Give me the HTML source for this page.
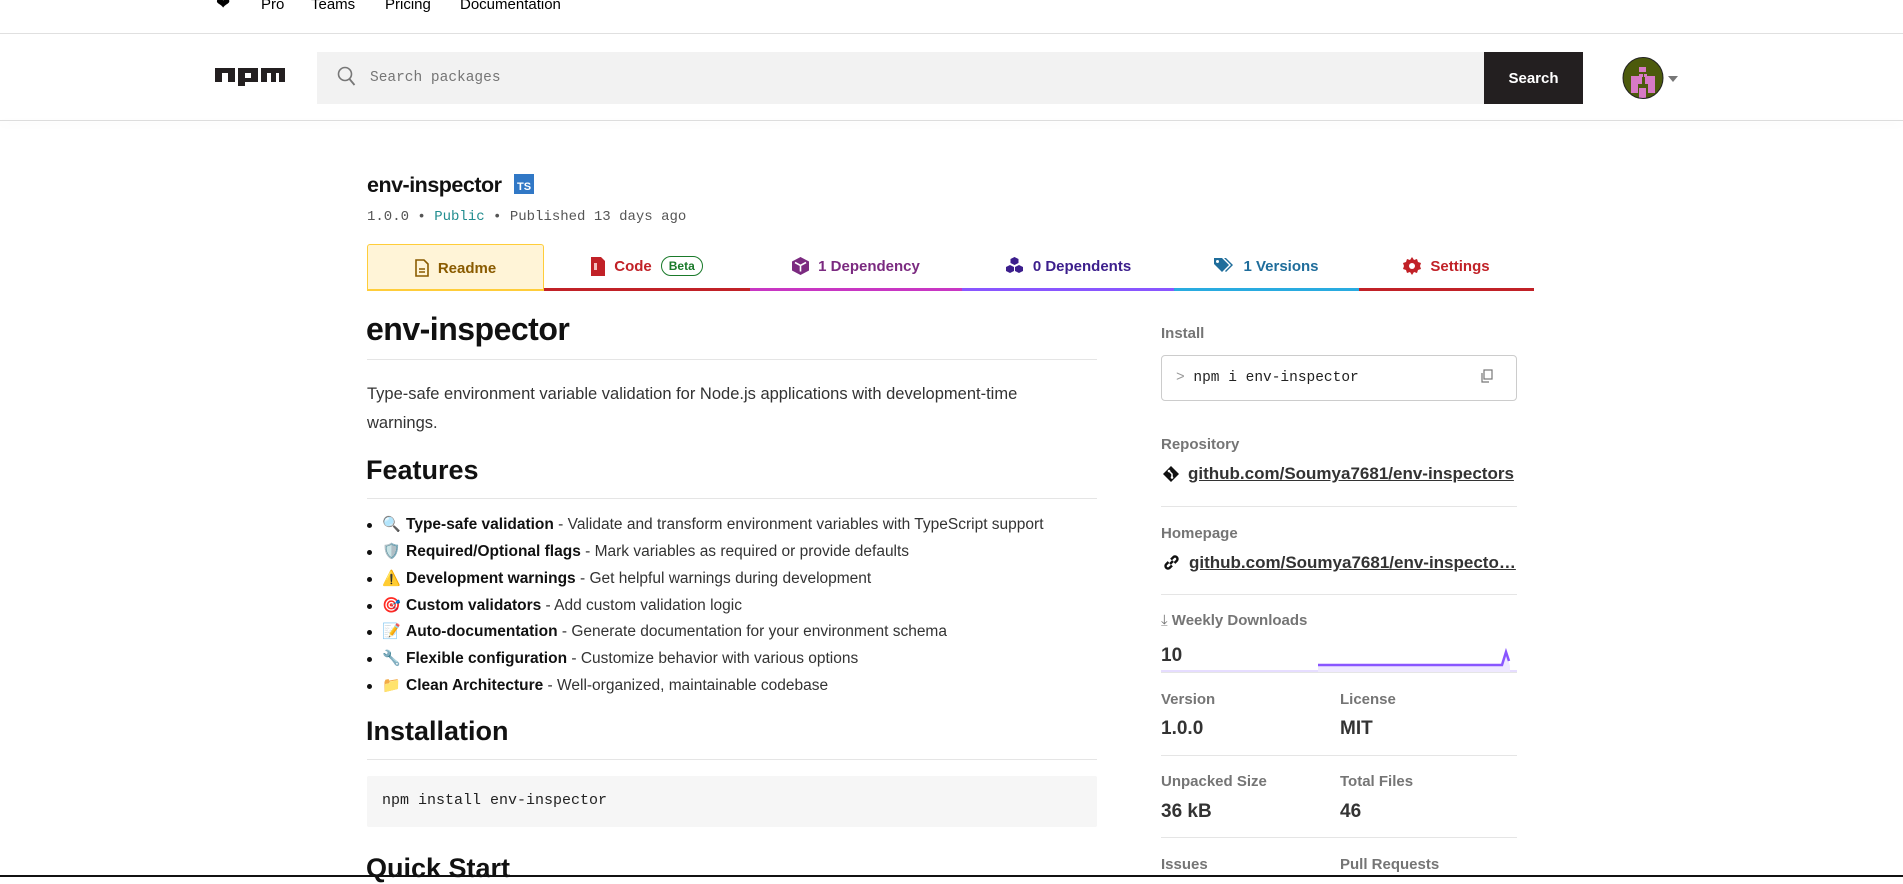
<!DOCTYPE html>
<html><head><meta charset="utf-8">
<style>
*{box-sizing:border-box;margin:0;padding:0}
body{width:1903px;height:877px;overflow:hidden;background:#fff;font-family:"Liberation Sans",sans-serif;color:#333;position:relative}
.a{position:absolute;white-space:nowrap}
.mono{font-family:"Liberation Mono",monospace}
.topnav{font-size:15px;color:#000;top:-4px}
.hr{position:absolute;height:1px;background:#e5e5e5}
.lab{font-size:15px;font-weight:bold;color:#757575}
.val{font-size:19px;font-weight:bold;color:#333}
.tab{position:absolute;top:244px;height:47px;font-size:15px;display:flex;align-items:center;justify-content:center;gap:9px}
.li{position:absolute;left:367px;font-size:15.5px;color:#333;white-space:nowrap}
.li b{color:#111}
.li:before{content:"";position:absolute;left:0;top:7px;width:5px;height:5px;border-radius:50%;background:#111}
.li span.e{position:absolute;left:15px;top:-1px;font-size:15px}
.li .t{position:absolute;left:39px;top:0}
</style></head><body>

<div class="a topnav" style="left:216px;font-size:17px;top:-6px">&#10084;</div>
<div class="a topnav" style="left:261px">Pro</div>
<div class="a topnav" style="left:311px">Teams</div>
<div class="a topnav" style="left:385px">Pricing</div>
<div class="a topnav" style="left:460px">Documentation</div>
<div class="hr" style="left:0;top:33px;width:1903px;background:#e0e0e0"></div>

<svg class="a" style="left:215px;top:68px" width="70" height="20" viewBox="0 0 70 20">
<path fill="#231f20" fill-rule="evenodd" d="M0 0h20v14h-7V5h-6v9H0z M23 0h20v14h-13v4h-7z M30 5v5h6V5z M46 0h24v14h-6V5h-3v9h-5V5h-4v9h-6z"/>
</svg>
<div class="a" style="left:317px;top:52px;width:1167px;height:52px;background:#f2f2f2"></div>
<svg class="a" style="left:337px;top:66px" width="20" height="22" viewBox="0 0 20 22"><circle cx="8" cy="8" r="6.5" fill="none" stroke="#777" stroke-width="1.6"/><path d="M12.5 13l5 6" stroke="#777" stroke-width="1.8"/></svg>
<div class="a mono" style="left:370px;top:70px;font-size:14.5px;color:#757575">Search packages</div>
<div class="a" style="left:1484px;top:52px;width:99px;height:52px;background:#231f20;color:#fff;font-weight:bold;font-size:15px;display:flex;align-items:center;justify-content:center">Search</div>
<svg class="a" style="left:1622px;top:57px" width="42" height="42" viewBox="0 0 42 42">
<defs><clipPath id="c"><ellipse cx="21" cy="21" rx="20" ry="20.5"/></clipPath></defs>
<g clip-path="url(#c)"><rect width="42" height="42" fill="#4c5a0c"/>
<rect x="17" y="10" width="7" height="5" fill="#d77ac5"/>
<rect x="9" y="19" width="11" height="8" fill="#d77ac5"/><rect x="23" y="19" width="10" height="8" fill="#d77ac5"/>
<rect x="17" y="17" width="4" height="3" fill="#d77ac5"/><rect x="22" y="17" width="3" height="3" fill="#d77ac5"/>
<rect x="9" y="27" width="7" height="9" fill="#d77ac5"/><rect x="17" y="31" width="7" height="11" fill="#d77ac5"/><rect x="26" y="27" width="7" height="9" fill="#d77ac5"/></g>
<ellipse cx="21" cy="21" rx="20" ry="20.5" fill="none" stroke="#222" stroke-width="1"/></svg>
<div class="a" style="left:1668px;top:76px;width:0;height:0;border-left:5px solid transparent;border-right:5px solid transparent;border-top:6px solid #777"></div>
<div class="a" style="left:0;top:120px;width:1903px;height:1px;background:#ddd;box-shadow:0 3px 8px rgba(0,0,0,.08)"></div>

<div class="a" style="left:367px;top:173px;font-size:21.5px;font-weight:bold;color:#111;letter-spacing:-0.5px">env-inspector</div>
<div class="a" style="left:514px;top:174px;width:20px;height:20px;background:#3178c6;color:#fff;font-size:11px;font-weight:bold;display:flex;align-items:flex-end;justify-content:center;padding-bottom:1px">TS</div>
<div class="a mono" style="left:367px;top:209px;font-size:14px;color:#555">1.0.0 • <span style="color:#218d8f">Public</span> • Published 13 days ago</div>

<div class="tab" style="left:367px;width:177px;background:#fff4d7;border:1px solid #ffcd3a;border-bottom:none;border-radius:3px 3px 0 0;color:#8a5b00;font-weight:bold">
<svg width="14" height="18" viewBox="0 0 14 18"><path d="M1 1h8l4 4v12H1z" fill="none" stroke="#8a5b00" stroke-width="1.6"/><path d="M4 10h6M4 13h6" stroke="#8a5b00" stroke-width="1.6"/></svg>Readme</div>
<div class="a" style="left:367px;top:289px;width:177px;height:2px;background:#ffcd3a"></div>
<div class="tab" style="left:544px;width:206px;color:#c12127;font-weight:bold;border-bottom:3px solid #c12127">
<svg width="14" height="19" viewBox="0 0 14 19"><path d="M0 0h10l4 4v15H0z" fill="#c12127"/><rect x="3" y="6" width="3" height="7" fill="#f3c0c0"/></svg>Code
<span style="border:1.5px solid #1a7a2a;color:#1a7a2a;border-radius:12px;font-size:12px;padding:2px 7px">Beta</span></div>
<div class="tab" style="left:750px;width:212px;color:#7b2a80;font-weight:bold;border-bottom:3px solid #c836c3">
<svg width="17" height="18" viewBox="0 0 17 18"><path d="M8.5 0L17 4.5v9L8.5 18 0 13.5v-9z" fill="#7b2a80"/><path d="M3 5.5l5.5 3 5.5-3M8.5 8.5v6" stroke="#fff" stroke-width="1.6" fill="none"/></svg>1 Dependency</div>
<div class="tab" style="left:962px;width:212px;color:#3c1e8c;font-weight:bold;border-bottom:3px solid #8956ff">
<svg width="19" height="18" viewBox="0 0 19 18"><path d="M9.5 0l4 2v4l-4 2-4-2V2zM5 8l4 2v4l-4 2-4-2v-4zM14 8l4 2v4l-4 2-4-2v-4z" fill="#3c1e8c"/></svg>0 Dependents</div>
<div class="tab" style="left:1174px;width:185px;color:#1f6d9b;font-weight:bold;border-bottom:3px solid #29abe0">
<svg width="20" height="17" viewBox="0 0 20 17"><path d="M0 0h8l7 7-7 7-8-8z" fill="#1f6d9b"/><circle cx="3.5" cy="3.5" r="1.5" fill="#fff"/><path d="M10 0h2l7 7-7 7-1-1 6-6z" fill="#1f6d9b"/></svg>1 Versions</div>
<div class="tab" style="left:1359px;width:175px;color:#c12127;font-weight:bold;border-bottom:3px solid #c12127">
<svg width="18" height="18" viewBox="0 0 18 18"><path d="M9 0l2 3 3-1 1 3 3 1-1 3 1 3-3 1-1 3-3-1-2 3-2-3-3 1-1-3-3-1 1-3-1-3 3-1 1-3 3 1z" fill="#c12127"/><circle cx="9" cy="9" r="3" fill="#fff"/></svg>Settings</div>

<div class="a" style="left:366px;top:311px;font-size:32px;font-weight:bold;color:#111;letter-spacing:-0.5px">env-inspector</div>
<div class="hr" style="left:367px;top:359px;width:730px"></div>
<div class="a" style="left:367px;top:380px;font-size:16.5px;line-height:29px;color:#333;white-space:normal;width:720px">Type-safe environment variable validation for Node.js applications with development-time warnings.</div>
<div class="a" style="left:366px;top:455px;font-size:27px;font-weight:bold;color:#111">Features</div>
<div class="hr" style="left:367px;top:498px;width:730px"></div>

<div class="li" style="top:516px"><span class="e">🔍</span><span class="t"><b>Type-safe validation</b> - Validate and transform environment variables with TypeScript support</span></div>
<div class="li" style="top:543px"><span class="e">🛡️</span><span class="t"><b>Required/Optional flags</b> - Mark variables as required or provide defaults</span></div>
<div class="li" style="top:570px"><span class="e">⚠️</span><span class="t"><b>Development warnings</b> - Get helpful warnings during development</span></div>
<div class="li" style="top:597px"><span class="e">🎯</span><span class="t"><b>Custom validators</b> - Add custom validation logic</span></div>
<div class="li" style="top:623px"><span class="e">📝</span><span class="t"><b>Auto-documentation</b> - Generate documentation for your environment schema</span></div>
<div class="li" style="top:650px"><span class="e">🔧</span><span class="t"><b>Flexible configuration</b> - Customize behavior with various options</span></div>
<div class="li" style="top:677px"><span class="e">📁</span><span class="t"><b>Clean Architecture</b> - Well-organized, maintainable codebase</span></div>

<div class="a" style="left:366px;top:716px;font-size:27px;font-weight:bold;color:#111">Installation</div>
<div class="hr" style="left:367px;top:759px;width:730px"></div>
<div class="a" style="left:367px;top:776px;width:730px;height:51px;background:#f6f6f6;border-radius:2px"></div>
<div class="a mono" style="left:382px;top:792px;font-size:15px;color:#222">npm install env-inspector</div>
<div class="a" style="left:366px;top:853px;font-size:27px;font-weight:bold;color:#111">Quick Start</div>

<div class="a lab" style="left:1161px;top:325px">Install</div>
<div class="a" style="left:1161px;top:355px;width:356px;height:46px;border:1px solid #ccc;border-radius:4px"></div>
<div class="a mono" style="left:1176px;top:370px;font-size:14.5px;color:#222"><span style="color:#999">&gt;</span> npm i env-inspector</div>
<svg class="a" style="left:1481px;top:369px" width="12" height="14" viewBox="0 0 12 14"><rect x="3" y="1" width="8" height="9" fill="none" stroke="#777" stroke-width="1.2"/><path d="M1 4v9h7" fill="none" stroke="#777" stroke-width="1.2"/></svg>

<div class="a lab" style="left:1161px;top:436px">Repository</div>
<svg class="a" style="left:1163px;top:466px" width="16" height="16" viewBox="0 0 16 16"><path d="M8 0l8 8-8 8-8-8z" fill="#111"/><path d="M6 5l3 3v4" stroke="#fff" stroke-width="1.5" fill="none"/><circle cx="9" cy="11.5" r="1.3" fill="#fff"/><circle cx="6" cy="5" r="1.3" fill="#fff"/></svg>
<div class="a" style="left:1188px;top:464px;font-size:17px;font-weight:bold;color:#333;text-decoration:underline">github.com/Soumya7681/env-inspectors</div>
<div class="hr" style="left:1161px;top:506px;width:356px"></div>

<div class="a lab" style="left:1161px;top:525px">Homepage</div>
<svg class="a" style="left:1163px;top:554px" width="17" height="17" viewBox="0 0 17 17"><g fill="none" stroke="#111" stroke-width="2.4"><path d="M7 10l3-3"/><path d="M5.5 8L3 10.5a2.5 2.5 0 003.5 3.5L9 11.5"/><path d="M8 5.5L10.5 3a2.5 2.5 0 013.5 3.5L11.5 9"/></g></svg>
<div class="a" style="left:1189px;top:553px;font-size:17px;font-weight:bold;color:#333;text-decoration:underline">github.com/Soumya7681/env-inspecto…</div>
<div class="hr" style="left:1161px;top:594px;width:356px"></div>

<div class="a lab" style="left:1161px;top:612px"><span style="font-weight:normal">&#10515;</span> Weekly Downloads</div>
<div class="a val" style="left:1161px;top:645px">10</div>
<svg class="a" style="left:1161px;top:630px" width="356" height="44" viewBox="0 0 356 44"><rect x="0" y="40" width="356" height="3" fill="#e6ddff"/><path d="M157 36H341L345 22L349 36V43H157z" fill="#efe9ff"/><path d="M157 35H341L345 22L348 31" fill="none" stroke="#8956ff" stroke-width="2.5"/></svg>
<div class="hr" style="left:1161px;top:672px;width:356px"></div>

<div class="a lab" style="left:1161px;top:691px">Version</div>
<div class="a val" style="left:1161px;top:718px">1.0.0</div>
<div class="a lab" style="left:1340px;top:691px">License</div>
<div class="a val" style="left:1340px;top:718px">MIT</div>
<div class="hr" style="left:1161px;top:755px;width:356px"></div>
<div class="a lab" style="left:1161px;top:773px">Unpacked Size</div>
<div class="a val" style="left:1161px;top:801px">36 kB</div>
<div class="a lab" style="left:1340px;top:773px">Total Files</div>
<div class="a val" style="left:1340px;top:801px">46</div>
<div class="hr" style="left:1161px;top:837px;width:356px"></div>
<div class="a lab" style="left:1161px;top:856px">Issues</div>
<div class="a lab" style="left:1340px;top:856px">Pull Requests</div>
<div class="a" style="left:0;top:875px;width:1903px;height:2px;background:#111"></div>
</body></html>
